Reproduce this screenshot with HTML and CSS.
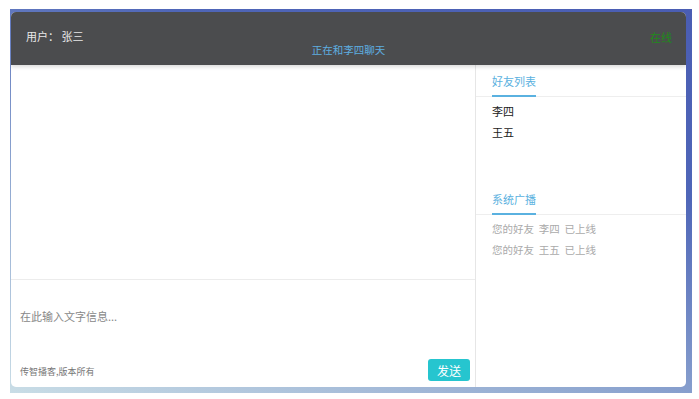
FILE: index.html
```html
<!DOCTYPE html>
<html lang="zh-CN">
<head>
    <meta charset="UTF-8">
    <meta name="viewport" content="width=device-width, initial-scale=1.0">
    <title>聊天室</title>
    <link rel="stylesheet" href="styles.css">
</head>
<body>
    <div class="bg">
        <div class="chat">
            <!-- 顶部 -->
            <div class="chat-header">
                <div class="user">用户：&nbsp;张三</div>
                <div class="talking">正在和李四聊天</div>
                <div class="status">在线</div>
            </div>
            <div class="chat-body">
                <div class="main">
                    <div class="messages"></div>
                    <div class="input-area">
                        <div class="input-box" contenteditable="true" data-placeholder="在此输入文字信息..."></div>
                        <div class="input-foot">
                            <span class="copyright">传智播客,版本所有</span>
                            <button class="send-btn">发送</button>
                        </div>
                    </div>
                </div>
                <div class="side">
                    <div class="tab"><span class="tab-title">好友列表</span></div>
                    <ul class="friends">
                        <li>李四</li>
                        <li>王五</li>
                    </ul>
                    <div class="tab"><span class="tab-title">系统广播</span></div>
                    <ul class="broadcast">
                        <li>您的好友&nbsp;&nbsp;李四&nbsp;&nbsp;已上线</li>
                        <li>您的好友&nbsp;&nbsp;王五&nbsp;&nbsp;已上线</li>
                    </ul>
                </div>
            </div>
        </div>
    </div>
</body>
</html>
```

FILE: styles.css
```css
body {
    margin: 0;
    font-family: "Noto Sans CJK SC", "Noto Sans", sans-serif;
    background-color: #fff;
}
.bg {
    margin: 9px 0 0 10px;
    width: 682px;
    height: 384px;
    box-sizing: border-box;
    padding: 3px 6px 6px 1px;
    background: linear-gradient(20deg, #c9dde6 0%, #8ea6d0 35%, #4f66b8 70%, #4a5db3 100%);
}
.chat {
    width: 675px;
    height: 375px;
    background: #fff;
    border-radius: 5px;
    display: flex;
    flex-direction: column;
    overflow: hidden;
}
.chat-header {
    height: 53px;
    background: #4b4c4e;
    position: relative;
    box-shadow: 0 2px 4px rgba(0, 0, 0, 0.15);
    z-index: 1;
    font-size: 11px;
}
.user {
    position: absolute;
    left: 15px;
    top: 16px;
    color: #e8e8e8;
    font-size: 11px;
}
.talking {
    position: absolute;
    left: 0;
    right: 0;
    top: 30px;
    text-align: center;
    color: #5eaee0;
    font-size: 10.5px;
}
.status {
    position: absolute;
    right: 14px;
    top: 17px;
    color: #1f8a1a;
    font-size: 11px;
}
.chat-body {
    flex: 1;
    display: flex;
}
.main {
    width: 464px;
    border-right: 1px solid #e6e6e6;
    display: flex;
    flex-direction: column;
}
.messages {
    height: 214px;
    border-bottom: 1px solid #ececec;
}
.input-area {
    flex: 1;
    display: flex;
    flex-direction: column;
}
.input-box {
    flex: 1;
    padding: 28px 9px 0;
    font-size: 11px;
    color: #333;
    outline: none;
}
.input-box:empty::before {
    content: attr(data-placeholder);
    color: #888;
}
.input-foot {
    display: flex;
    justify-content: space-between;
    align-items: flex-end;
    padding: 0 5px 6px 9px;
}
.copyright {
    font-size: 9px;
    color: #777;
    margin-bottom: 3px;
}
.send-btn {
    width: 42px;
    height: 22px;
    padding: 0;
    border: none;
    border-radius: 3px;
    background-color: #26c5cf;
    color: #fff;
    font-family: inherit;
    font-size: 12px;
    cursor: pointer;
}
.side {
    flex: 1;
}
.tab {
    border-bottom: 1px solid #eee;
    padding-left: 16px;
}
.tab-title {
    display: inline-block;
    font-size: 11px;
    color: #5ab1e0;
    padding: 8px 0 6px;
    border-bottom: 2px solid #5ab1e0;
    margin-bottom: -1px;
}
ul {
    list-style: none;
    margin: 0;
    padding: 0 0 0 16px;
}
.friends {
    height: 82px;
    padding-top: 4px;
}
.friends li {
    font-size: 11px;
    color: #222;
    line-height: 21px;
}
.broadcast {
    padding-top: 3px;
}
.broadcast li {
    font-size: 10.5px;
    color: #aaa;
    line-height: 21px;
}
```
